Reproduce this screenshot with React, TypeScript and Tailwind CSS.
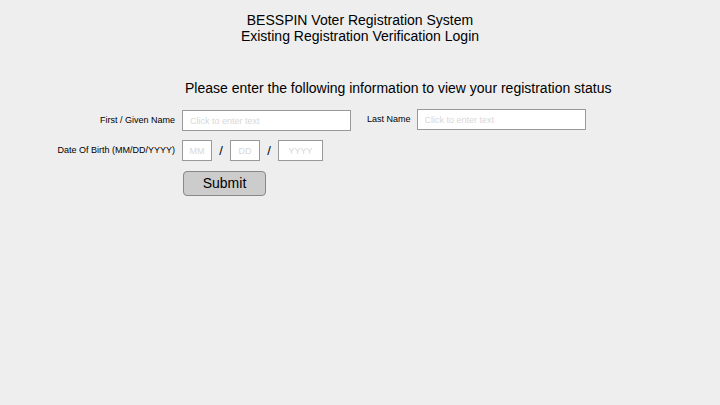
export default function App() {
  return (
    <div
      className="flex h-[405px] w-[720px] flex-col bg-[#eeeeee] text-black"
      style={{ fontFamily: '"Liberation Sans", Arial, sans-serif' }}
    >
      <div className="pt-[12px] text-center text-[14px] leading-[16px]">
        <p>BESSPIN Voter Registration System</p>
        <p>Existing Registration Verification Login</p>
      </div>

      <p className="mt-[35px] pl-[185px] text-[14px] leading-[18px]">
        Please enter the following information to view your registration status
      </p>

      <div className="mt-[13px] flex items-center">
        <span className="w-[175px] text-right text-[9px]">First / Given Name</span>
        <input
          placeholder="Click to enter text"
          className="ml-[7px] h-[21px] w-[169px] border border-[#999] bg-white px-[7px] text-[9px] placeholder:text-[#d8d8d8]"
        />
        <span className="ml-[16px] -mt-[2px] text-[9px]">Last Name</span>
        <input
          placeholder="Click to enter text"
          className="ml-[6px] -mt-[2px] h-[21px] w-[169px] border border-[#999] bg-white px-[7px] text-[9px] placeholder:text-[#d8d8d8]"
        />
      </div>

      <div className="mt-[9px] flex items-center">
        <span className="w-[175px] text-right text-[9px]">Date Of Birth (MM/DD/YYYY)</span>
        <input
          placeholder="MM"
          className="ml-[7px] h-[21px] w-[30px] border border-[#999] bg-white text-center text-[9px] placeholder:text-[#d8d8d8]"
        />
        <span className="w-[18px] text-center text-[13px]">/</span>
        <input
          placeholder="DD"
          className="h-[21px] w-[30px] border border-[#999] bg-white text-center text-[9px] placeholder:text-[#d8d8d8]"
        />
        <span className="w-[18px] text-center text-[13px]">/</span>
        <input
          placeholder="YYYY"
          className="h-[21px] w-[45px] border border-[#999] bg-white text-center text-[9px] placeholder:text-[#d8d8d8]"
        />
      </div>

      <div className="mt-[10px] pl-[183px]">
        <button className="h-[25px] w-[83px] rounded-[4px] border border-[#888] bg-[#cccccc] text-[14px]">
          Submit
        </button>
      </div>
    </div>
  );
}
